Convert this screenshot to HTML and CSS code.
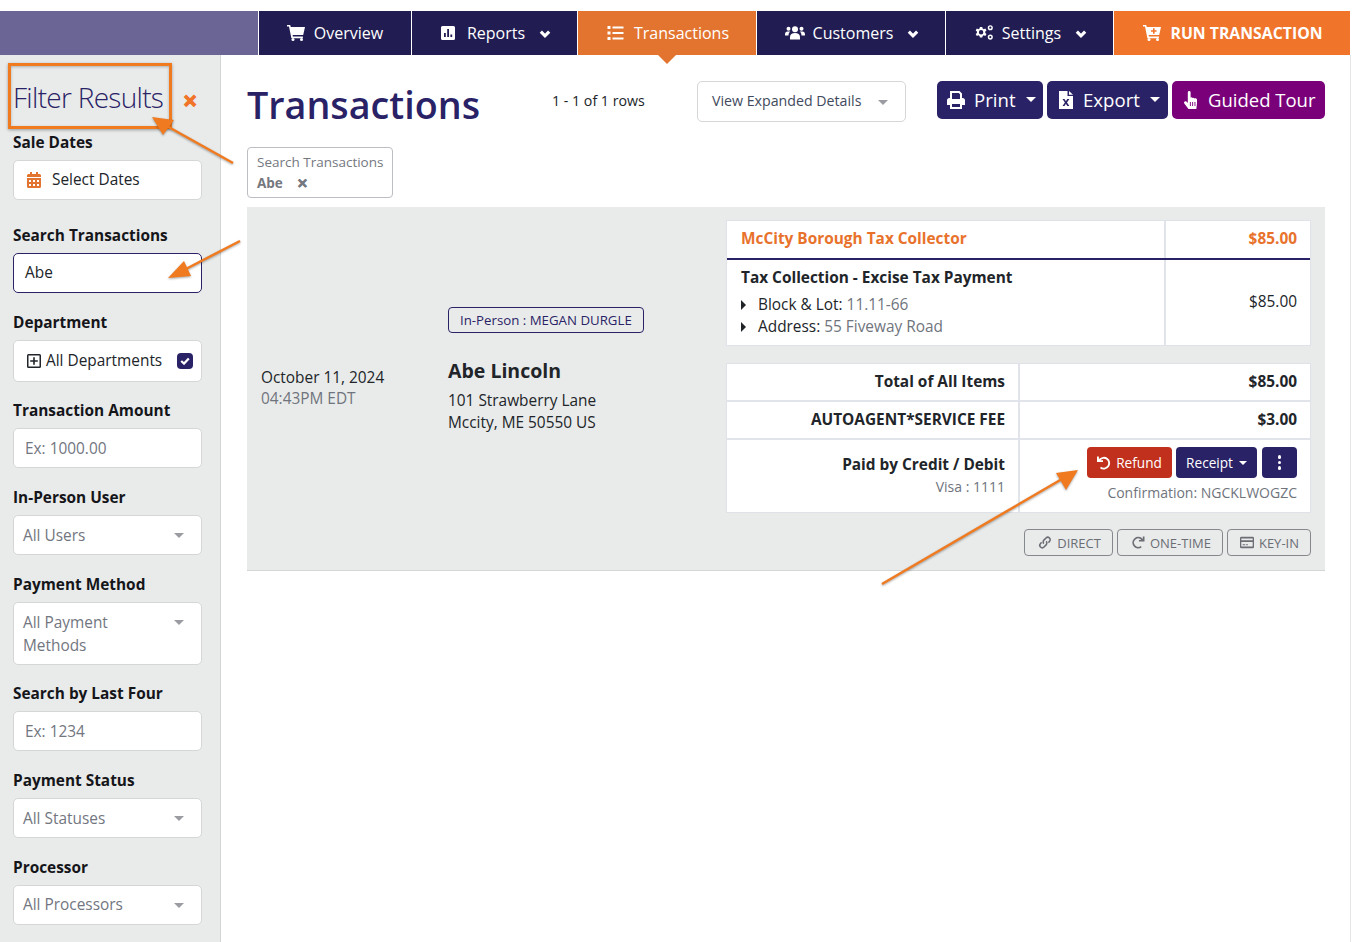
FILE: index.html
```html
<!DOCTYPE html>
<html lang="en">
<head>
<meta charset="UTF-8" />
<title>Transactions</title>
<link rel="stylesheet" href="styles.css">
</head>
<body>

<svg width="0" height="0" class="defs">
  <defs>
    <symbol id="i-cart" viewBox="0 0 18 16"><path d="M0 0h3.200l.6 2H18l-1.800 8H5.600l.3 1.600h10v1.600H4.400L2 1.600H0z"/><circle cx="6" cy="14.500" r="1.500"/><circle cx="14.500" cy="14.500" r="1.500"/></symbol>
    <symbol id="i-cartplus" viewBox="0 0 18 16"><path fill-rule="evenodd" d="M0 0h3.200l.6 2H18l-1.800 8H5.600l.3 1.600h10v1.600H4.400L2 1.600H0zM10 3.200v2H8v1.600h2v2h1.600v-2h2V5.200h-2v-2z"/><circle cx="6" cy="14.500" r="1.500"/><circle cx="14.500" cy="14.500" r="1.500"/></symbol>
    <symbol id="i-chart" viewBox="0 0 14 14"><path fill-rule="evenodd" d="M1.500 0h11A1.500 1.500 0 0 1 14 1.500v11a1.500 1.500 0 0 1-1.500 1.500h-11A1.500 1.500 0 0 1 0 12.500v-11A1.500 1.500 0 0 1 1.500 0zM3 7v4h1.800V7zM6.200 3v8H8V3zM9.400 8.500V11h1.800V8.500z"/></symbol>
    <symbol id="i-list" viewBox="0 0 16 14"><path d="M0 0h3v3H0zM0 5.500h3v3H0zM0 11h3v3H0zM5 .6h11v1.800H5zM5 6.100h11v1.800H5zM5 11.600h11v1.800H5z"/></symbol>
    <symbol id="i-users" viewBox="0 0 20 14"><circle cx="3.500" cy="3.200" r="2"/><circle cx="16.500" cy="3.200" r="2"/><circle cx="10" cy="3.700" r="3"/><path d="M5 14v-2.500C5 9 7 7.600 10 7.600s5 1.400 5 3.900V14zM0 9c0-2 1-3 2.500-3H5.300C4 7 3.600 8 3.500 10H0zM20 9c0-2-1-3-2.500-3h-2.800c1.300 1 1.700 2 1.800 4H20z"/></symbol>
    <symbol id="i-cogs" viewBox="0 0 19 15.500"><path fill-rule="evenodd" d="M5.300 2h2.400l.4 1.700 1.200.6 1.600-.7 1.200 2-1.300 1.200v1.400l1.300 1.200-1.200 2-1.600-.7-1.200.6-.4 1.700H5.300l-.4-1.700-1.200-.6-1.600.7-1.200-2 1.300-1.200V6.800L.9 5.600l1.200-2 1.600.7 1.200-.6zM6.500 5.200a2.300 2.300 0 1 0 0 4.600 2.300 2.300 0 0 0 0-4.600z"/><circle cx="16" cy="2.800" r="1.900" fill="none" stroke="currentColor" stroke-width="1.500"/><circle cx="16" cy="12.500" r="1.900" fill="none" stroke="currentColor" stroke-width="1.500"/></symbol>
    <symbol id="i-chev" viewBox="0 0 10 8"><path d="M1.300 1.500L5 5.200l3.700-3.700" fill="none" stroke="currentColor" stroke-width="2.800"/></symbol>
    <symbol id="i-print" viewBox="0 0 18 18"><path fill-rule="evenodd" d="M3 0h9.500L15 2.500V7h.5A2.500 2.500 0 0 1 18 9.500V14h-3v4H3v-4H0V9.500A2.500 2.500 0 0 1 2.500 7H3zM5 2v6h8V3.300L11.700 2zM5 13v3h8v-3z"/></symbol>
    <symbol id="i-file" viewBox="0 0 14 18"><path fill-rule="evenodd" d="M0 0h8.500v5H14v13H0zM10 0l4 3.700H10zM3.500 8l2.400 3.500L3.500 15h2l1.400-2.200L8.300 15h2.100l-2.400-3.500L10.400 8H8.300L6.900 10.200 5.500 8z"/></symbol>
    <symbol id="i-hand" viewBox="0 0 16 18"><path fill-rule="evenodd" d="M4.300 1.400a1.400 1.400 0 0 1 2.800 0V6.500c.8-.3 1.500-.1 1.800.4.800-.4 1.700-.2 2.100.5 1-.4 2.500 0 2.500 1.400V12.500L12.800 18H5L.8 12.400c-1-1.500.9-3 2.100-1.800l1.400 1.500zM6.400 11v4h.9v-4zM8.700 11v4h.9v-4zM11 11v4h.9v-4z"/></symbol>
    <symbol id="i-cal" viewBox="0 0 14 16"><path fill-rule="evenodd" d="M3 0h2v2h4V0h2v2h1.500A1.500 1.500 0 0 1 14 3.500V5H0V3.500A1.500 1.500 0 0 1 1.500 2H3zM0 6h14v8.500a1.500 1.500 0 0 1-1.500 1.500h-11A1.500 1.500 0 0 1 0 14.500zM2 8v2h2V8zM6 8v2h2V8zM10 8v2h2V8zM2 12v2h2v-2zM6 12v2h2v-2zM10 12v2h2v-2z"/></symbol>
    <symbol id="i-plus" viewBox="0 0 14 14"><path fill-rule="evenodd" d="M1.500 0h11A1.500 1.500 0 0 1 14 1.500v11a1.500 1.500 0 0 1-1.500 1.500h-11A1.500 1.500 0 0 1 0 12.500v-11A1.500 1.500 0 0 1 1.500 0zM1.500 1.500v11h11v-11zM6.200 3.200h1.600v3h3v1.600h-3v3H6.200v-3h-3V6.200h3z"/></symbol>
    <symbol id="i-check" viewBox="0 0 10 8"><path d="M1.200 4L4 6.600 8.800 1.400" fill="none" stroke="#fff" stroke-width="2.200"/></symbol>
    <symbol id="i-undo" viewBox="0 0 14 14"><path d="M0 .5l1.800 0 .2 2.600A6.300 6.300 0 1 1 3 12.200l1-1.400A4.500 4.500 0 1 0 3.400 4.200L6 4.300V6H0z"/></symbol>
    <symbol id="i-redo" viewBox="0 0 14 14"><path d="M14 .5h-1.800l-.2 2.600A6.300 6.300 0 1 0 11 12.200l-1-1.400a4.500 4.500 0 1 1 .6-6.600L8 4.300V6h6z"/></symbol>
    <symbol id="i-link" viewBox="0 0 14 14"><g fill="none" stroke="currentColor" stroke-width="1.700"><path d="M5.800 8.200a2.600 2.600 0 0 1 0-3.700l2.300-2.300a2.600 2.600 0 0 1 3.700 3.700l-1.200 1.200"/><path d="M8.200 5.800a2.600 2.600 0 0 1 0 3.700l-2.300 2.300a2.600 2.600 0 0 1-3.700-3.700l1.200-1.200"/></g></symbol>
    <symbol id="i-card" viewBox="0 0 16 13"><path fill-rule="evenodd" d="M1.500 0h13A1.500 1.500 0 0 1 16 1.500v10a1.500 1.500 0 0 1-1.500 1.500h-13A1.500 1.500 0 0 1 0 11.500v-10A1.500 1.500 0 0 1 1.500 0zM1.500 2v1.800h13V2zM1.500 6v5.200h13V6zM3 8.500h3v1H3zM7 8.500h2v1H7z"/></symbol>
  </defs>
</svg>

<nav class="topnav">
  <div class="nav-brand"></div>
  <a class="nav-item w-overview"><svg class="nav-ico"><use href="#i-cart"/></svg>Overview</a>
  <a class="nav-item w-reports"><svg class="nav-ico small"><use href="#i-chart"/></svg>Reports<svg class="chev"><use href="#i-chev"/></svg></a>
  <a class="nav-item w-trans active"><svg class="nav-ico"><use href="#i-list"/></svg>Transactions</a>
  <a class="nav-item w-cust"><svg class="nav-ico wide"><use href="#i-users"/></svg>Customers<svg class="chev"><use href="#i-chev"/></svg></a>
  <a class="nav-item w-set"><svg class="nav-ico wide"><use href="#i-cogs"/></svg>Settings<svg class="chev"><use href="#i-chev"/></svg></a>
  <a class="nav-item run"><svg class="nav-ico"><use href="#i-cartplus"/></svg>RUN TRANSACTION</a>
</nav>

<div class="layout">
  <aside class="sidebar">
    <div class="filter-head">
      <h2>Filter Results</h2>
      <span class="filter-close">&#10005;</span>
    </div>

    <div class="field first">
      <label>Sale Dates</label>
      <div class="box dates"><svg class="cal"><use href="#i-cal"/></svg>Select Dates</div>
    </div>
    <div class="field">
      <label>Search Transactions</label>
      <div class="box focus">Abe</div>
    </div>
    <div class="field">
      <label>Department</label>
      <div class="box dept"><svg class="plus"><use href="#i-plus"/></svg>All Departments<span class="check"><svg><use href="#i-check"/></svg></span></div>
    </div>
    <div class="field">
      <label>Transaction Amount</label>
      <div class="box hint">Ex: 1000.00</div>
    </div>
    <div class="field">
      <label>In-Person User</label>
      <div class="box select">All Users<i class="caret"></i></div>
    </div>
    <div class="field">
      <label>Payment Method</label>
      <div class="box select tall">All Payment<br>Methods<i class="caret"></i></div>
    </div>
    <div class="field">
      <label>Search by Last Four</label>
      <div class="box hint">Ex: 1234</div>
    </div>
    <div class="field">
      <label>Payment Status</label>
      <div class="box select">All Statuses<i class="caret"></i></div>
    </div>
    <div class="field">
      <label>Processor</label>
      <div class="box select">All Processors<i class="caret"></i></div>
    </div>
  </aside>

  <main class="content">
    <div class="head-row">
      <h1>Transactions</h1>
      <span class="rows">1 - 1 of 1 rows</span>
      <div class="view-select">View Expanded Details<i class="caret"></i></div>
      <div class="actions">
        <a class="btn navy btn-print"><svg class="b-ico"><use href="#i-print"/></svg>Print<i class="caret white"></i></a>
        <a class="btn navy btn-export"><svg class="b-ico"><use href="#i-file"/></svg>Export<i class="caret white"></i></a>
        <a class="btn purple btn-tour"><svg class="b-ico"><use href="#i-hand"/></svg>Guided Tour</a>
      </div>
    </div>

    <div class="chip">
      <span class="chip-title">Search Transactions</span>
      <span class="chip-value">Abe <b>&#10005;</b></span>
    </div>

    <section class="panel">
      <div class="when">
        <div>October 11, 2024</div>
        <div class="muted">04:43PM EDT</div>
      </div>
      <div class="who">
        <span class="person-tag">In-Person : MEGAN DURGLE</span>
        <h3>Abe Lincoln</h3>
        <p>101 Strawberry Lane<br>Mccity, ME 50550 US</p>
      </div>
      <div class="detail">
        <div class="items">
          <div class="items-head">
            <div class="c-name">McCity Borough Tax Collector</div>
            <div class="c-amt">$85.00</div>
          </div>
          <div class="items-body">
            <div class="c-name">
              <strong>Tax Collection - Excise Tax Payment</strong>
              <div class="attr"><i class="tri"></i>Block &amp; Lot: <span class="muted">11.11-66</span></div>
              <div class="attr"><i class="tri"></i>Address: <span class="muted">55 Fiveway Road</span></div>
            </div>
            <div class="c-amt">$85.00</div>
          </div>
        </div>

        <div class="totals">
          <div class="t-row">
            <div class="t-label">Total of All Items</div>
            <div class="t-value">$85.00</div>
          </div>
          <div class="t-row">
            <div class="t-label">AUTOAGENT*SERVICE FEE</div>
            <div class="t-value">$3.00</div>
          </div>
          <div class="t-row pay">
            <div class="t-label">Paid by Credit / Debit<small>Visa : 1111</small></div>
            <div class="t-value">
              <div class="pay-btns">
                <a class="mini red"><svg class="m-ico"><use href="#i-undo"/></svg>Refund</a>
                <a class="mini navy receipt">Receipt<i class="caret white sm"></i></a>
                <a class="mini navy dots"><i></i><i></i><i></i></a>
              </div>
              <small>Confirmation: NGCKLWOGZC</small>
            </div>
          </div>
        </div>

        <div class="tags">
          <span class="tag"><svg class="t-ico"><use href="#i-link"/></svg>DIRECT</span>
          <span class="tag"><svg class="t-ico"><use href="#i-redo"/></svg>ONE-TIME</span>
          <span class="tag key-in"><svg class="t-ico"><use href="#i-card"/></svg>KEY-IN</span>
        </div>
      </div>
    </section>
  </main>
</div>

<!-- annotations drawn on top of the screenshot -->
<div class="callout"></div>
<svg class="arrows" width="1352" height="942" viewBox="0 0 1352 942">
  <g class="arrow">
    <path d="M233 163L165 125" />
    <polygon points="152,117 174,120 163,135" />
    <path d="M240 241L182 271" />
    <polygon points="168,278 184,261 191,276" />
    <path d="M882 584L1062 479" />
    <polygon points="1078,470 1066,490 1056,473" />
  </g>
</svg>

</body>
</html>
```

FILE: styles.css
```css
* {
  box-sizing: border-box;
}
html, body {
  margin: 0;
  height: 942px;
  overflow: hidden;
  background: #fff;
}
body {
  font-family: "Open Sans", "Liberation Sans", sans-serif;
  font-size: 15.400px;
  color: #212529;
  padding-top: 11px;
  position: relative;
}
.defs {
  position: absolute;
}
svg {
  fill: currentColor;
}

/* top nav */
.topnav {
  display: flex;
  height: 44px;
  width: 1350px;
  color: #fff;
}
.nav-brand {
  width: 258px;
  background: #6b6595;
}
.nav-item {
  display: flex;
  align-items: center;
  justify-content: center;
  background: #211d52;
  margin-left: 1px;
  font-size: 16px;
  position: relative;
  padding-bottom: 1px;
}
.w-overview { width: 152px; }
.w-reports { width: 165px; padding-left: 3px; }
.w-trans { width: 178px; padding-left: 2px; }
.w-cust { width: 188px; padding-left: 2px; }
.w-set { width: 167px; padding-left: 2px; }
.nav-item.active {
  background: #e2742f;
}
.nav-item.active::after {
  content: "";
  position: absolute;
  left: 50%;
  top: 100%;
  margin-left: -9px;
  border: 9px solid transparent;
  border-bottom: 0;
  border-top-color: #e2742f;
}
.nav-item.run {
  flex: 1;
  background: #f0752b;
  font-weight: 700;
  font-size: 15.800px;
  padding-left: 2px;
}
.nav-ico {
  width: 18px;
  height: 16px;
  margin-right: 9px;
}
.nav-ico.small {
  width: 14px;
  height: 14px;
  margin-right: 12px;
}
.nav-ico.wide {
  width: 20px;
  height: 15px;
  margin-right: 8px;
}
.w-trans .nav-ico {
  width: 17px;
  height: 14px;
  margin-right: 10px;
}
.chev {
  width: 12px;
  height: 9px;
  margin-left: 14px;
  margin-top: 3px;
}

.layout {
  display: flex;
  width: 1351px;
  height: 887px;
  border-right: 1px solid #e6e6e6;
}

/* sidebar */
.sidebar {
  width: 221px;
  flex: none;
  background: #e9ebea;
  border-right: 1px solid #d3d5d6;
  padding: 0 18px 0 13px;
}
.filter-head {
  display: flex;
  align-items: center;
  height: 78px;
  padding-top: 5px;
}
.filter-head h2 {
  margin: 0;
  font-size: 28px;
  font-weight: 300;
  letter-spacing: -0.700px;
  color: #2a2266;
  flex: 1;
  white-space: nowrap;
}
.filter-close {
  color: #f0752b;
  font-size: 17px;
  font-weight: 700;
  -webkit-text-stroke: 1.300px #f0752b;
  margin: 7px 5px 0 0;
}
.field {
  margin-bottom: 19.700px;
}
.field.first {
  margin-bottom: 26px;
}
.field label {
  display: block;
  padding-top: 1px;
  margin: 0 0 8px;
  font-size: 15.400px;
  line-height: 18px;
  font-weight: 700;
  color: #15151a;
  white-space: nowrap;
}
.box {
  position: relative;
  display: flex;
  align-items: center;
  height: 40px;
  background: #fff;
  border: 1px solid #d4d6d8;
  border-radius: 5px;
  padding: 0 11px 2px;
  color: #212529;
}
.box.focus {
  border-color: #2a2266;
}
.box.dates {
  padding-left: 13px;
}
.cal {
  width: 14px;
  height: 16px;
  color: #e2742f;
  margin: 2px 11px 0 0;
}
.box.dept {
  height: 42px;
  padding: 0 11px 0 13px;
}
.plus {
  width: 14px;
  height: 14px;
  margin-right: 5px;
  color: #212529;
}
.check {
  position: absolute;
  right: 8px;
  top: 12px;
  width: 16px;
  height: 16px;
  border-radius: 4px;
  background: #2a2266;
  padding: 4px 3px;
}
.check svg {
  display: block;
  width: 10px;
  height: 8px;
}
.box.hint, .box.select {
  color: #72767f;
  padding-bottom: 0;
}
.box.select {
  padding-left: 9px;
}
.box.tall {
  display: block;
  height: 63px;
  padding-top: 8px;
  line-height: 23px;
}
.caret {
  display: inline-block;
  border: 5px solid transparent;
  border-bottom: 0;
  border-top-color: #9a9ca2;
}
.box.select .caret {
  position: absolute;
  right: 17px;
  top: 17px;
}

/* main */
.content {
  flex: 1;
  padding: 26px 26px 0 26px;
}
.head-row {
  display: flex;
  align-items: flex-start;
  height: 66px;
}
.head-row h1 {
  margin: 0;
  width: 305px;
  padding-top: 1px;
  font-size: 37.700px;
  font-weight: 600;
  line-height: 46px;
  color: #2a2266;
  white-space: nowrap;
}
.rows {
  width: 145px;
  font-size: 14.200px;
  line-height: 40px;
  color: #212529;
}
.view-select {
  display: flex;
  align-items: center;
  justify-content: space-between;
  width: 209px;
  height: 41px;
  border: 1px solid #d4d6d8;
  border-radius: 5px;
  padding: 0 17px 2px 14px;
  font-size: 14.200px;
  color: #414a5c;
}
.view-select .caret {
  margin-top: 3px;
}
.actions {
  display: flex;
  gap: 4px;
  margin-left: 31px;
}
.btn {
  display: flex;
  align-items: center;
  height: 38px;
  border-radius: 5px;
  color: #fff;
  font-size: 18.600px;
  padding: 0 0 1px 10px;
}
.btn.navy { background: #2a2266; }
.btn.purple { background: #7a007a; }
.btn-print { width: 106px; }
.btn-export { width: 121px; padding-left: 12px; }
.btn-tour { width: 153px; padding-left: 11px; font-size: 18.500px; }
.b-ico {
  width: 18px;
  height: 18px;
  margin: 1px 9px 0 0;
}
.btn-export .b-ico {
  width: 14px;
  margin-right: 10px;
}
.btn-tour .b-ico {
  width: 17px;
  margin-right: 8px;
}
.caret.white {
  border-top-color: #fff;
  margin-left: 10px;
}
.caret.sm {
  border-width: 4px;
  border-bottom: 0;
  margin-left: 6px;
}

.chip {
  width: 146px;
  height: 51px;
  border: 1px solid #bcbec4;
  border-radius: 4px;
  padding: 4px 9px;
  font-size: 13.500px;
  line-height: 20px;
  color: #75787f;
  margin-bottom: 9px;
  white-space: nowrap;
}
.chip-title {
  display: block;
  margin-bottom: 1px;
}
.chip-value {
  font-weight: 700;
}
.chip-value b {
  margin-left: 11px;
  font-size: 13px;
  -webkit-text-stroke: 0.600px #75787f;
}

.panel {
  display: flex;
  height: 364px;
  background: #e9ebea;
  border-bottom: 1px solid #d3d5d6;
  padding: 13px 14px 0 14px;
}
.when {
  width: 187px;
  align-self: center;
  line-height: 21px;
  margin-top: -14px;
}
.muted {
  color: #70747d;
}
.who {
  width: 278px;
  padding-top: 87px;
}
.person-tag {
  display: inline-block;
  height: 26px;
  border: 1px solid #2a2266;
  border-radius: 4px;
  padding: 0 11px;
  font-size: 13.250px;
  line-height: 24px;
  color: #2a2266;
}
.who h3 {
  margin: 24px 0 6px;
  font-size: 19.500px;
  font-weight: 700;
  line-height: 27px;
  color: #212529;
}
.who p {
  margin: 0;
  line-height: 22px;
}
.detail {
  width: 585px;
}
.items, .totals {
  background: #fff;
  border: 1px solid #dfe2e8;
}
.items-head {
  display: flex;
  height: 39px;
  border-bottom: 2px solid #2a2266;
  font-weight: 700;
  color: #e8722c;
  line-height: 35px;
}
.items-body {
  display: flex;
  height: 85px;
}
.c-name {
  width: 439px;
  padding: 0 14px;
  border-right: 2px solid #e1e4ea;
}
.c-amt {
  flex: 1;
  padding-right: 13px;
  text-align: right;
}
.items-body .c-amt {
  line-height: 83px;
}
.items-body strong {
  display: block;
  line-height: 20px;
  margin: 8px 0 6px;
}
.attr {
  position: relative;
  padding-left: 17px;
  line-height: 22px;
}
.tri {
  position: absolute;
  left: 0;
  top: 6px;
  border: 5px solid transparent;
  border-right: 0;
  border-left: 5px solid #212529;
}

.totals {
  margin-top: 17px;
}
.t-row {
  display: flex;
  height: 38px;
  border-bottom: 2px solid #e1e4ea;
  font-weight: 700;
  line-height: 35px;
  text-align: right;
}
.t-row.pay {
  height: 72px;
  border-bottom: 0;
}
.t-label {
  width: 293px;
  padding-right: 13px;
  border-right: 2px solid #e1e4ea;
}
.t-value {
  flex: 1;
  padding-right: 13px;
}
.pay .t-label {
  padding-top: 15px;
  line-height: 20px;
}
.t-row small {
  display: block;
  font-size: 14px;
  font-weight: 400;
  line-height: 20px;
  color: #70747d;
}
.pay .t-label small {
  margin-top: 2px;
}
.pay .t-value {
  padding-top: 7px;
}
.pay-btns {
  display: flex;
  justify-content: flex-end;
  gap: 4px;
  margin-bottom: 5px;
}
.mini {
  display: flex;
  align-items: center;
  justify-content: center;
  height: 31px;
  border-radius: 4px;
  color: #fff;
  font-size: 13.600px;
  font-weight: 400;
}
.mini.red { background: #c0301c; width: 85px; }
.mini.navy { background: #2a2266; }
.mini.receipt { width: 81px; }
.m-ico {
  width: 14px;
  height: 14px;
  margin-right: 5px;
}
.mini.dots {
  flex-direction: column;
  gap: 2px;
  width: 35px;
  margin-left: 1px;
}
.dots i {
  width: 3.500px;
  height: 3.500px;
  border-radius: 50%;
  background: #fff;
}

.tags {
  display: flex;
  justify-content: flex-end;
  gap: 4px;
  margin-top: 16px;
}
.tag {
  display: flex;
  align-items: center;
  height: 27px;
  border: 1px solid #85888d;
  border-radius: 4px;
  padding: 0 11px 0 13px;
  font-size: 13px;
  color: #6b6e75;
}
.tag.key-in {
  padding-left: 12px;
}
.t-ico {
  width: 14px;
  height: 13px;
  margin-right: 5px;
}

/* annotations */
.callout {
  position: absolute;
  left: 8px;
  top: 63px;
  width: 164px;
  height: 66px;
  border: 3px solid #f07a1f;
  box-shadow: 0 1px 3px rgba(0,0,0,0.35), inset 0 1px 3px rgba(0,0,0,0.25);
}
.arrows {
  position: absolute;
  left: 0;
  top: 0;
  pointer-events: none;
}
.arrow {
  filter: drop-shadow(0 1px 1px rgba(0,0,0,0.35));
}
.arrow path {
  fill: none;
  stroke: #f07a1f;
  stroke-width: 2.500;
}
.arrow polygon {
  fill: #f07a1f;
}
```
